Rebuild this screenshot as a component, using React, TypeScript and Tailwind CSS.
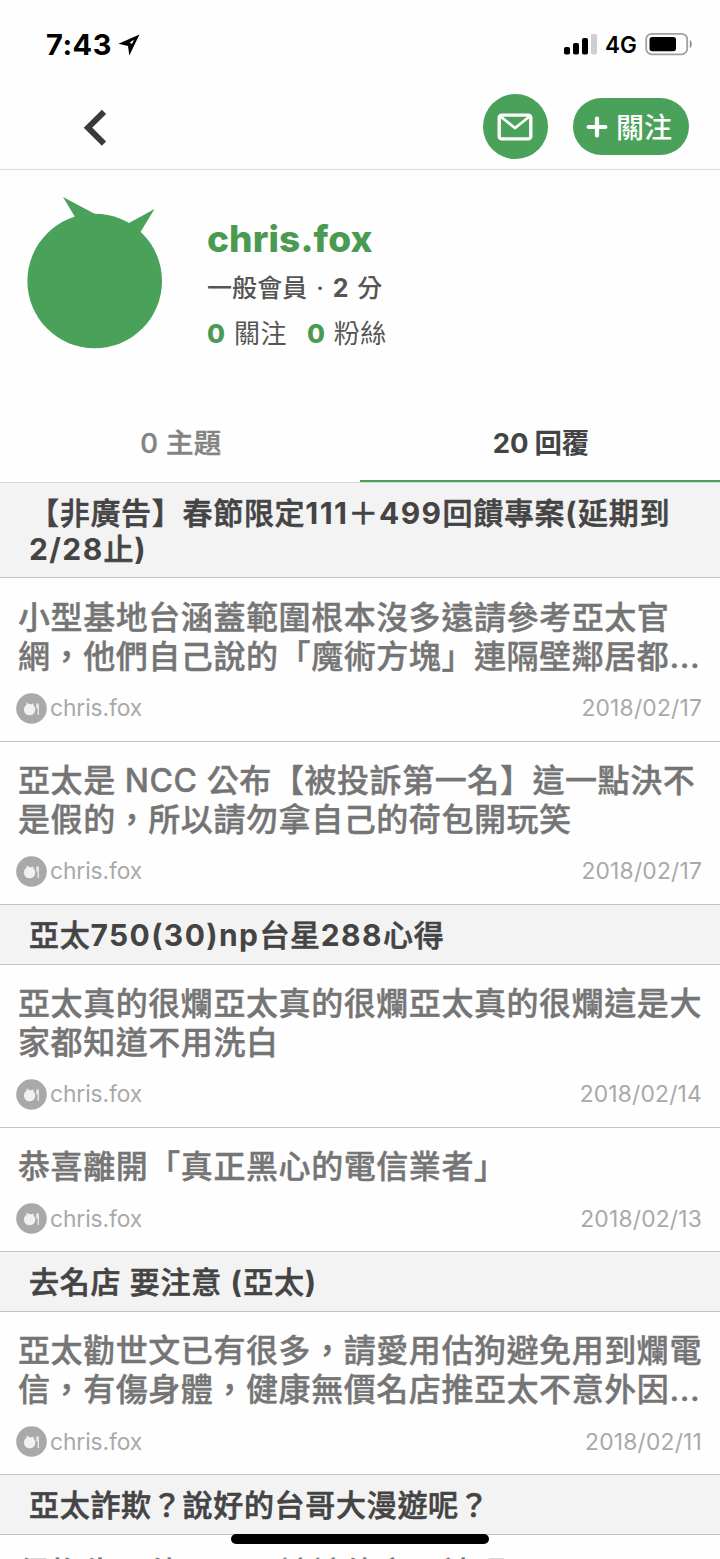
type Post = { lines: string[]; date: string };

type Topic = { title: string[]; posts: Post[] };

const AUTHOR = "chris.fox";

const topics: Topic[] = [
  {
    title: ["【非廣告】春節限定111＋499回饋專案(延期到", "2/28止)"],
    posts: [
      {
        lines: ["小型基地台涵蓋範圍根本沒多遠請參考亞太官", "網，他們自己說的「魔術方塊」連隔壁鄰居都..."],
        date: "2018/02/17",
      },
      {
        lines: ["亞太是 NCC 公布【被投訴第一名】這一點決不", "是假的，所以請勿拿自己的荷包開玩笑"],
        date: "2018/02/17",
      },
    ],
  },
  {
    title: ["亞太750(30)np台星288心得"],
    posts: [
      {
        lines: ["亞太真的很爛亞太真的很爛亞太真的很爛這是大", "家都知道不用洗白"],
        date: "2018/02/14",
      },
      { lines: ["恭喜離開「真正黑心的電信業者」"], date: "2018/02/13" },
    ],
  },
  {
    title: ["去名店 要注意 (亞太)"],
    posts: [
      {
        lines: ["亞太勸世文已有很多，請愛用估狗避免用到爛電", "信，有傷身體，健康無價名店推亞太不意外因..."],
        date: "2018/02/11",
      },
    ],
  },
  {
    title: ["亞太詐欺？說好的台哥大漫遊呢？"],
    posts: [{ lines: ["很抱告，他，，亞該該他官，請碼"], date: "2018/02/10" }],
  },
];

export default function App() {
  return (
    <div
      lang="zh-Hant"
      className="relative flex h-[1559px] w-[720px] flex-col overflow-hidden bg-[#fefefe] font-['Inter','Noto_Sans_CJK_TC',sans-serif] text-[#4a4a4a]"
    >
      <StatusBar />
      <NavBar />
      <Profile />
      <Tabs />
      <main>
        {topics.map((topic) => (
          <TopicSection key={topic.title[0]} topic={topic} />
        ))}
      </main>
      <div className="absolute bottom-[15px] left-[231px] h-[10px] w-[258px] rounded-full bg-black" />
    </div>
  );
}

function StatusBar() {
  return (
    <div className="flex h-[88px] shrink-0 items-center justify-between pr-[27px] pl-[46px] text-black">
      <div className="flex items-center gap-[6px]">
        <span className="pt-px text-[29px] leading-none font-bold tracking-[0.5px]">7:43</span>
        <svg width="22" height="22" viewBox="0 0 22 22" className="mt-[2px]">
          <path d="M21.5 0.5 0.5 9.8 10 12 11.3 21.5Z" />
          <path d="M16 5.5 11.8 8.6 14 10Z" fill="#fff" />
        </svg>
      </div>
      <div className="flex items-center">
        <svg width="34" height="22" viewBox="0 0 34 22">
          <rect x="0" y="14" width="6" height="7.5" rx="1.8" />
          <rect x="9" y="10" width="6" height="11.5" rx="1.8" />
          <rect x="18" y="5" width="6" height="16.5" rx="1.8" />
          <rect x="27" y="1" width="6" height="20.5" rx="1.8" fill="#cfcfcf" />
        </svg>
        <span className="ml-[7px] w-[34px] pt-[2px] text-[22.5px] leading-none font-semibold">4G</span>
        <svg width="48" height="24" viewBox="0 0 48 24" className="ml-[6px]">
          <rect x="1.2" y="1.8" width="41" height="20.5" rx="5.5" fill="none" stroke="#a0a0a0" strokeWidth="1.8" />
          <rect x="4.5" y="5" width="26.5" height="14.3" rx="2.8" />
          <path d="M44.8 8c2.6 1 2.6 7.2 0 8.2Z" fill="#8c8c8c" />
        </svg>
      </div>
    </div>
  );
}

function NavBar() {
  return (
    <header className="flex h-[82px] shrink-0 items-start border-b border-[#d9d9d9] pr-[31px] pl-[82px]">
      <button type="button" aria-label="返回" className="mt-[20px]">
        <svg width="26" height="40" viewBox="0 0 26 40" fill="none" stroke="#3a3a3a" strokeWidth="6">
          <path d="M22 3.8 6 19.7 22 35.6" />
        </svg>
      </button>
      <button
        type="button"
        aria-label="訊息"
        className="mt-[6px] ml-auto flex size-[65px] items-center justify-center rounded-full bg-[#4aa15a]"
      >
        <svg width="36" height="28" viewBox="0 0 36 28" fill="none" stroke="#fff" strokeWidth="3.4" className="mr-px">
          <rect x="2.2" y="2.1" width="31.6" height="23.8" rx="2.5" />
          <path d="M3.5 3.5 18 15 32.5 3.5" strokeWidth="2.8" />
        </svg>
      </button>
      <button
        type="button"
        className="mt-[10px] ml-[25px] flex h-[57px] w-[116px] items-center rounded-full bg-[#4aa15a] pl-[13px] text-white"
      >
        <svg width="22" height="22" viewBox="0 0 22 22" stroke="#fff" strokeWidth="4.2" strokeLinecap="round">
          <path d="M11 2.6v16.8M2.6 11h16.8" />
        </svg>
        <span className="ml-[8px] pt-[2px] text-[28px] leading-[40px] font-medium whitespace-nowrap">關注</span>
      </button>
    </header>
  );
}

function Profile() {
  return (
    <section className="flex h-[234px] shrink-0 pt-[26px] pl-[27px]">
      <svg width="136" height="153" viewBox="0 0 136 153" fill="#4aa15a">
        <circle cx="67.7" cy="85" r="67.3" />
        <path d="M36 1 68 18 54 45 48 21Z" />
        <path d="M127.5 13 102 27 96 50 113.5 36Z" />
      </svg>
      <div className="ml-[44px] text-[#555]">
        <h1 className="mt-[20px] text-[37px] leading-[46px] font-extrabold tracking-[0.1px] text-[#4a9a52]">
          {AUTHOR}
        </h1>
        <p className="mt-[8px] text-[25px] leading-[36px] font-medium tracking-[0.1px] [word-spacing:2px]">
          一般會員 · <b className="font-bold">2</b> 分
        </p>
        <p className="mt-[10px] flex text-[26px] leading-[36px] tracking-[0.5px] [word-spacing:0.6px]">
          <Stat count={0} label="關注" />
          <Stat count={0} label="粉絲" />
        </p>
      </div>
    </section>
  );
}

function Stat({ count, label }: { count: number; label: string }) {
  return (
    <span className="mr-[20px]">
      <b className="font-extrabold text-[#4a9a52]">{count}</b> {label}
    </span>
  );
}

function Tabs() {
  return (
    <nav className="flex h-[78.6px] shrink-0 border-b border-[#d9d9d9] text-[27.5px] leading-[40px] whitespace-pre">
      <div className="flex flex-1 justify-center pt-[19.4px] pl-[2px] font-medium tracking-[0.3px] text-[#838383] [-webkit-text-stroke:0.4px_#838383]">
        0 主題
      </div>
      <div className="flex flex-1 justify-center border-b-2 border-[#4aa15a] pt-[19.4px] pl-[2px] font-bold tracking-[-0.2px] text-[#444]">
        20 回覆
      </div>
    </nav>
  );
}

function TopicSection({ topic }: { topic: Topic }) {
  return (
    <section>
      <h2 className="border-b border-[#c4c4c4] bg-[#f3f3f3] pt-[12px] pb-[10.6px] pl-[29px] text-[30px] leading-[36px] whitespace-nowrap text-[#444]">
        {topic.title.map((line) => (
          <MixedLine key={line} text={line} />
        ))}
      </h2>
      {topic.posts.map((post) => (
        <PostRow key={post.lines[0]} post={post} />
      ))}
    </section>
  );
}

// Latin runs are set wider and heavier than the Chinese around them
function MixedLine({ text }: { text: string }) {
  return (
    <span className="block">
      {text.split(/([\x21-\x7e]+)/).map((run, i) => (
        <span
          key={i}
          className={
            i % 2 === 1
              ? "font-bold tracking-[1.4px]"
              : "font-medium tracking-[0.7px] [-webkit-text-stroke:0.6px_#444]"
          }
        >
          {run}
        </span>
      ))}
    </span>
  );
}

function PostRow({ post }: { post: Post }) {
  return (
    <article className="border-b border-[#c4c4c4] pt-[19.4px] pr-[18px] pb-[17px] pl-[16px]">
      <p className="pl-[2px] text-[32px] leading-[39px] font-medium tracking-[0.57px] whitespace-nowrap text-[#757575] [-webkit-text-stroke:0.4px_#757575]">
        {post.lines.map((line) => (
          <span key={line} className="block">
            {line}
          </span>
        ))}
      </p>
      <div className="mt-[17px] flex h-[31px] items-center text-[22.8px] text-[#a9a9a9]">
        <AuthorBadge />
        <span className="ml-[3px] tracking-[-0.1px]">{AUTHOR}</span>
        <time className="ml-auto tracking-[0.2px]">{post.date}</time>
      </div>
    </article>
  );
}

function AuthorBadge() {
  return (
    <svg width="31" height="31" viewBox="0 0 31 31" fill="#f1f1f1">
      <circle cx="15.5" cy="15.5" r="15.3" fill="#a9a9a9" />
      <circle cx="13.6" cy="16.6" r="5.7" />
      <path d="M10.3 9.5 14 11.5 11 13.5ZM17.5 10.2 14.5 12 17.3 13.5Z" />
      <path d="M20.2 10.5h2.8v11.5h-1.4v-6l-1.4-1Z" opacity=".85" />
    </svg>
  );
}
